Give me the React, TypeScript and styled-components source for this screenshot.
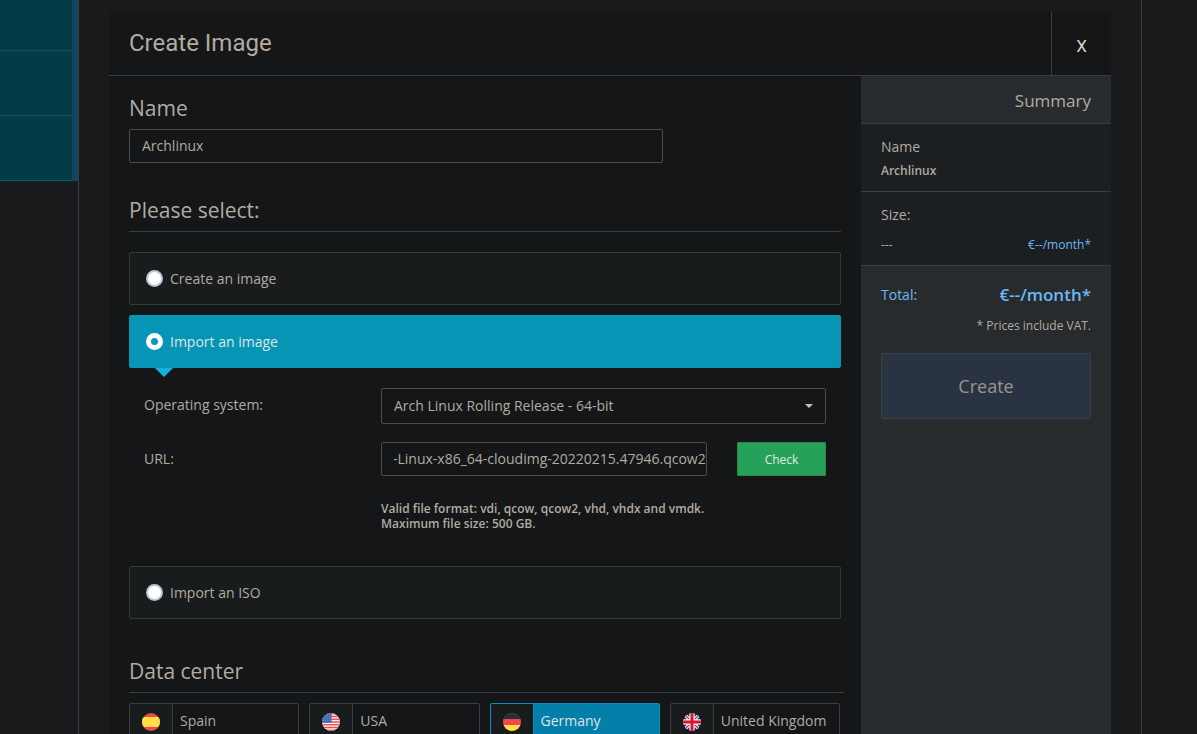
import React, { useEffect, useRef, useState } from "react";
import styled, { createGlobalStyle, css } from "styled-components";

const c = {
  page: "#181a1b",
  panel: "#141617",
  row: "#181c1c",
  summary: "#282b2d",
  summaryDark: "#1b1f21",
  line: "#3a3e40",
  field: "#4a4c4d",
  text: "#b2aba1",
  link: "#6cb8f5",
};

const GlobalStyle = createGlobalStyle`
  *, *::before, *::after { box-sizing: border-box; }
  html { scrollbar-width: none; background: ${c.page}; }
  body {
    margin: 0;
    background: ${c.page};
    color: ${c.text};
    font: 14px/20px "Open Sans", "Noto Sans", sans-serif;
  }
  h1, h2, p { margin: 0; padding: 0; }
  button, input, select { font: inherit; color: inherit; }
`;

const Page = styled.div`
  display: flex;
  min-height: 100vh;
`;

const Sidebar = styled.nav`
  flex: 0 0 79px;
  border-right: 1px solid ${c.line};
`;

const SideItem = styled.a<{ $short?: boolean; $last?: boolean }>`
  display: block;
  height: ${(p) => (p.$short ? 51 : 65)}px;
  background: #033c46;
  border-right: 6px solid #12435f;
  box-shadow: inset 0 -1px ${(p) => (p.$last ? "#04606d" : "#154e62")};
`;

const Content = styled.main`
  flex: 1;
  min-width: 0;
  padding: 12px 30px 0;
  border-right: 1px solid ${c.line};
`;

const Gutter = styled.div`
  flex: 0 0 55px;
`;

const Dialog = styled.section`
  display: flex;
  flex-direction: column;
  min-height: 100%;
  background: ${c.panel};
  border-radius: 3px 3px 0 0;
`;

const DialogHeader = styled.header`
  display: flex;
  height: 64px;
  border-bottom: 1px solid ${c.line};
`;

const Title = styled.h1`
  flex: 1;
  padding-left: 20px;
  font: 400 24px/62px Roboto, sans-serif;
`;

const CloseButton = styled.button`
  width: 60px;
  padding: 4px 0 0;
  border: 0;
  border-left: 1px solid ${c.line};
  background: none;
  color: #d8d4cf;
  font: 400 17px/20px Roboto, sans-serif;
`;

const DialogBody = styled.div`
  display: flex;
  flex: 1;
`;

const Form = styled.form`
  flex: 1;
  min-width: 0;
  padding: 17px 20px 20px;
`;

const headingText = css`
  font-size: 21px;
  font-weight: 400;
  line-height: 30px;
`;

const NameLabel = styled.label`
  ${headingText}
  display: block;
  margin-bottom: 6px;
`;

const Heading = styled.h2<{ $wide?: boolean }>`
  ${headingText}
  padding-bottom: 6px;
  border-bottom: 1px solid ${c.line};
  margin-right: ${(p) => (p.$wide ? -3 : 0)}px;
`;

const TextInput = styled.input`
  display: block;
  width: 100%;
  min-width: 0;
  height: 34px;
  padding: 0 0 2px 12px;
  border: 1px solid ${c.field};
  border-radius: 2px;
  background: transparent;
  outline: 0;
`;

const NameField = styled.div`
  width: 75%;
  margin-bottom: 32px;
`;

const Options = styled.div`
  display: flex;
  flex-direction: column;
  gap: 10px;
  margin: 20px 0 37px;
`;

const Option = styled.label<{ $active: boolean }>`
  position: relative;
  display: flex;
  align-items: center;
  gap: 7px;
  height: 53px;
  padding-left: 16px;
  border: 1px solid ${(p) => (p.$active ? "#0795b5" : "#34393a")};
  border-radius: 2px;
  background: ${(p) => (p.$active ? "#0795b5" : c.row)};
  color: ${(p) => (p.$active ? "#dfe6e6" : c.text)};

  ${(p) =>
    p.$active &&
    css`
      &::after {
        content: "";
        position: absolute;
        top: 52px;
        left: 25px;
        border: 9px solid transparent;
        border-top-color: #10b4dc;
        border-bottom: 0;
      }
    `}
`;

const Radio = styled.input`
  appearance: none;
  width: 17px;
  height: 17px;
  margin: 0;
  border: 2px solid #bcc5d6;
  border-radius: 50%;
  background: #fff;

  &:checked {
    border: 5px solid #fff;
    background: #0797c4;
  }
`;

const ImportDetails = styled.div`
  display: grid;
  grid-template-columns: 237px 1fr;
  row-gap: 18px;
  padding: 10px 15px 25px;
`;

const FieldLabel = styled.label`
  line-height: 34px;
`;

const SelectBox = styled.div`
  display: grid;
  align-items: center;

  > * { grid-area: 1 / 1; }
  > svg { justify-self: end; margin-right: 13px; pointer-events: none; }
`;

const Select = styled.select`
  appearance: none;
  width: 100%;
  height: 36px;
  padding: 0 30px 0 12px;
  border: 1px solid ${c.field};
  border-radius: 2px;
  background: ${c.panel};
`;

const UrlRow = styled.div`
  display: grid;
  grid-template-columns: 1fr 89px;
  gap: 30px;
`;

const CheckButton = styled.button`
  height: 34px;
  padding: 2px 0 0;
  border: 1px solid #2c8a45;
  border-radius: 1px;
  background: #25a15a;
  color: #e4e8e2;
  font-size: 12px;
`;

const Hint = styled.p`
  grid-column: 2;
  margin-top: 7px;
  font-size: 12px;
  font-weight: 600;
  line-height: 15px;
`;

const Centers = styled.div`
  display: grid;
  grid-template-columns: repeat(4, 1fr);
  gap: 10px;
  margin: 10px 1px 0 0;
`;

const Center = styled.button<{ $active: boolean }>`
  display: flex;
  height: 37px;
  padding: 0;
  border: 1px solid ${(p) => (p.$active ? "#0a8fbc" : c.line)};
  border-radius: 2px;
  background: ${(p) => (p.$active ? "#037fa9" : "transparent")};
  color: ${(p) => (p.$active ? "#dfe6e6" : c.text)};
  line-height: 33px;
  white-space: nowrap;

  > span:first-child {
    display: flex;
    align-items: center;
    justify-content: center;
    width: 43px;
    height: 100%;
    margin-right: 7px;
    border-right: 1px solid ${(p) => (p.$active ? "#0a8fbc" : c.line)};
    background: ${c.row};
  }
`;

const Summary = styled.aside`
  flex: 0 0 250px;
  background: ${c.summary};
`;

const SummaryTitle = styled.h2`
  height: 48px;
  padding: 0 20px;
  border-bottom: 1px solid ${c.line};
  font-size: 17px;
  font-weight: 400;
  line-height: 49px;
  text-align: right;
`;

const SummaryItem = styled.div<{ $gap: number }>`
  display: flex;
  flex-direction: column;
  gap: ${(p) => p.$gap}px;
  padding: 13px 20px 10px;
  border-bottom: 1px solid ${c.line};
  background: ${c.summaryDark};
`;

const SummaryLine = styled.div`
  display: flex;
  justify-content: space-between;
  font-size: 12px;
`;

const Strong = styled.strong`
  font-size: 12px;
  font-weight: 600;
`;

const Price = styled.span`
  color: ${c.link};
`;

const TotalBox = styled.div`
  padding: 19px 20px;
`;

const TotalLine = styled.div`
  display: flex;
  align-items: center;
  justify-content: space-between;
  color: ${c.link};

  strong { font-size: 17px; font-weight: 600; }
`;

const Vat = styled.p`
  margin: 11px 0 17px;
  font-size: 12px;
  text-align: right;
`;

const CreateButton = styled.button`
  display: block;
  width: 100%;
  height: 66px;
  border: 1px solid #3a4246;
  border-radius: 2px;
  background: #2a3342;
  color: #999590;
  font-size: 18px;
`;

const flagArt: Record<string, React.ReactNode> = {
  Spain: (
    <>
      <rect width="18" height="18" fill="#f3484b" />
      <rect y="4" width="18" height="10" fill="#ffdf45" />
    </>
  ),
  USA: (
    <>
      <rect width="18" height="18" fill="#f5f1f1" />
      {[0, 1, 2, 3, 4, 5, 6].map((i) => (
        <rect key={i} y={i * 2.77} width="18" height="1.38" fill="#f0474d" />
      ))}
      <rect width="9.5" height="9.7" fill="#3c6cb4" />
      {[1.6, 3.6, 5.6, 7.6].map((y) =>
        [1.6, 3.6, 5.6, 7.6].map((x) => (
          <circle key={`${x}-${y}`} cx={x} cy={y} r="0.4" fill="#b6c9e6" />
        ))
      )}
    </>
  ),
  Germany: (
    <>
      <rect width="18" height="18" fill="#f3484b" />
      <rect width="18" height="6" fill="#22303a" />
      <rect y="12" width="18" height="6" fill="#ffdf45" />
    </>
  ),
  "United Kingdom": (
    <>
      <rect width="18" height="18" fill="#0c2a80" />
      <path d="M0 0L18 18M18 0L0 18" stroke="#eee" strokeWidth="3.4" />
      <path d="M0 0L18 18M18 0L0 18" stroke="#d8152f" strokeWidth="1.2" />
      <path d="M9 0V18M0 9H18" stroke="#f3eff0" strokeWidth="5.4" />
      <path d="M9 0V18M0 9H18" stroke="#d8152f" strokeWidth="3" />
    </>
  ),
};

function Flag({ country }: { country: string }) {
  const id = `flag-${country.replace(" ", "-")}`;
  return (
    <svg width="18" height="18" viewBox="0 0 18 18" aria-hidden="true">
      <clipPath id={id}>
        <circle cx="9" cy="9" r="9" />
      </clipPath>
      <g clipPath={`url(#${id})`}>{flagArt[country]}</g>
    </svg>
  );
}

export default function App() {
  const [name, setName] = useState("Archlinux");
  const [source, setSource] = useState("import");
  const [url, setUrl] = useState("-Linux-x86_64-cloudimg-20220215.47946.qcow2");
  const [center, setCenter] = useState("Germany");
  const urlInput = useRef<HTMLInputElement>(null);

  // Keep the file name at the end of a long URL in view.
  useEffect(() => {
    const input = urlInput.current;
    if (input) input.scrollLeft = input.scrollWidth;
  }, [source]);

  const option = (value: string, label: string) => (
    <Option $active={source === value}>
      <Radio
        type="radio"
        name="source"
        checked={source === value}
        onChange={() => setSource(value)}
      />
      {label}
    </Option>
  );

  return (
    <Page>
      <GlobalStyle />
      <Sidebar>
        <SideItem href="#servers" $short />
        <SideItem href="#network" />
        <SideItem href="#images" $last />
      </Sidebar>
      <Content>
        <Dialog>
          <DialogHeader>
            <Title>Create Image</Title>
            <CloseButton type="button">X</CloseButton>
          </DialogHeader>
          <DialogBody>
            <Form>
              <NameField>
                <NameLabel htmlFor="name">Name</NameLabel>
                <TextInput
                  id="name"
                  value={name}
                  onChange={(e) => setName(e.target.value)}
                />
              </NameField>

              <Heading>Please select:</Heading>
              <Options>
                {option("create", "Create an image")}
                {option("import", "Import an image")}
                {source === "import" && (
                  <ImportDetails>
                    <FieldLabel htmlFor="os">Operating system:</FieldLabel>
                    <SelectBox>
                      <Select id="os">
                        <option>Arch Linux Rolling Release - 64-bit</option>
                      </Select>
                      <svg width="8" height="4" viewBox="0 0 8 4" aria-hidden="true">
                        <path d="M0 0H8L4 4Z" fill="#c8c2b9" />
                      </svg>
                    </SelectBox>
                    <FieldLabel htmlFor="url">URL:</FieldLabel>
                    <UrlRow>
                      <TextInput
                        id="url"
                        ref={urlInput}
                        value={url}
                        onChange={(e) => setUrl(e.target.value)}
                      />
                      <CheckButton type="button">Check</CheckButton>
                    </UrlRow>
                    <Hint>
                      Valid file format: vdi, qcow, qcow2, vhd, vhdx and vmdk.
                      <br />
                      Maximum file size: 500 GB.
                    </Hint>
                  </ImportDetails>
                )}
                {option("iso", "Import an ISO")}
              </Options>

              <Heading $wide>Data center</Heading>
              <Centers>
                {Object.keys(flagArt).map((country) => (
                  <Center
                    key={country}
                    type="button"
                    $active={center === country}
                    onClick={() => setCenter(country)}
                  >
                    <span>
                      <Flag country={country} />
                    </span>
                    {country}
                  </Center>
                ))}
              </Centers>
            </Form>

            <Summary>
              <SummaryTitle>Summary</SummaryTitle>
              <SummaryItem $gap={4}>
                <span>Name</span>
                <Strong>{name}</Strong>
              </SummaryItem>
              <SummaryItem $gap={10}>
                <span>Size:</span>
                <SummaryLine>
                  <span>---</span>
                  <Price>€--/month*</Price>
                </SummaryLine>
              </SummaryItem>
              <TotalBox>
                <TotalLine>
                  <span>Total:</span>
                  <strong>€--/month*</strong>
                </TotalLine>
                <Vat>* Prices include VAT.</Vat>
                <CreateButton type="button">Create</CreateButton>
              </TotalBox>
            </Summary>
          </DialogBody>
        </Dialog>
      </Content>
      <Gutter />
    </Page>
  );
}
